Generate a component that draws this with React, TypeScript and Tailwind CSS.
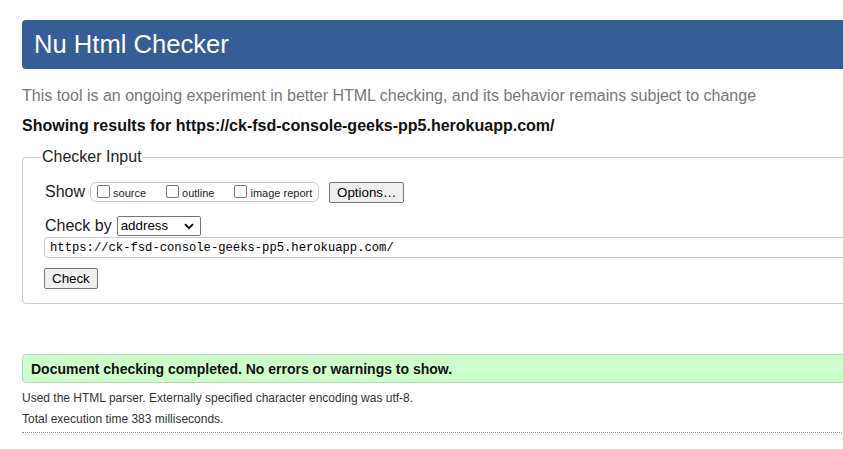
import React from 'react';

// Small square checkbox drawn like Chrome's default control
const Box = () => (
  <span className="inline-block w-[13px] h-[13px] border border-[#767676] rounded-[2px] bg-white shrink-0" />
);

const Option = ({ label }: { label: string }) => (
  <label className="flex items-center gap-[3px]">
    <Box />
    <span className="text-[11px] text-[#222] leading-none mt-[3px]">{label}</span>
  </label>
);

const Btn = ({ children }: { children: React.ReactNode }) => (
  <button className="h-[21px] px-[7px] bg-[#efefef] border border-[#767676] rounded-[2px] text-[13.33px] text-black leading-none">
    {children}
  </button>
);

export default function App() {
  return (
    <div className="w-[843px] h-[449px] overflow-hidden bg-white font-['Liberation_Sans',Arial,sans-serif] text-[#222]">
      <div className="pl-[22px] w-[1000px]">
        <div className="mt-[20px] h-[49px] bg-[#365d95] rounded-[4px] pl-[12px] flex items-center">
          <h1 className="text-white text-[25.6px] leading-none">Nu Html Checker</h1>
        </div>

        <p className="mt-[18px] text-[16px] leading-[18px] text-[#777]">
          This tool is an ongoing experiment in better HTML checking, and its behavior remains subject to change
        </p>
        <p className="mt-[12px] text-[16px] leading-[18px] font-bold text-[#111]">
          Showing results for https://ck-fsd-console-geeks-pp5.herokuapp.com/
        </p>

        <fieldset className="mt-[13px] border border-[#ccc] rounded-[4px] pl-[22px] pb-[13px]">
          <legend className="-ml-[4px] px-[1px] text-[16px] leading-[18px] text-[#222]">Checker Input</legend>

          <div className="mt-[15px] flex items-center h-[21px]">
            <span className="text-[16px]">Show</span>
            <div className="ml-[5px] h-[20px] w-[229px] border border-[#ccc] rounded-[6px] flex items-center pl-[6px] gap-[20px]">
              <Option label="source" />
              <Option label="outline" />
              <Option label="image report" />
            </div>
            <div className="ml-[10px]">
              <Btn>Options…</Btn>
            </div>
          </div>

          <div className="mt-[14px] flex items-center h-[20px]">
            <span className="text-[16px]">Check by</span>
            <div className="ml-[5px] h-[20px] w-[84px] border border-[#767676] rounded-[2px] flex items-center justify-between pl-[3px] pr-[6px]">
              <span className="text-[13.33px] text-black leading-none">address</span>
              <svg width="10" height="7" viewBox="0 0 10 7" fill="none">
                <path d="M1 1.2 L5 5.2 L9 1.2" stroke="#000" strokeWidth="1.8" />
              </svg>
            </div>
          </div>

          <div className="mt-[1px] -ml-[1px] h-[21px] border border-[#ccc] rounded-[4px] flex items-center pl-[5px]">
            <span className="mt-[2px] font-['Liberation_Mono','DejaVu_Sans_Mono',monospace] text-[12.2px] text-black leading-none">
              https://ck-fsd-console-geeks-pp5.herokuapp.com/
            </span>
          </div>

          <div className="mt-[8px] -ml-[1px]">
            <Btn>Check</Btn>
          </div>
        </fieldset>

        <div className="mt-[50px] h-[29px] bg-[#ccffcc] border border-[#b3dcb3] rounded-[4px] flex items-center pl-[8px]">
          <p className="text-[14px] font-bold text-[#111] leading-none">
            Document checking completed. No errors or warnings to show.
          </p>
        </div>

        <p className="mt-[8px] text-[12px] leading-[14px] text-[#333]">
          Used the HTML parser. Externally specified character encoding was utf-8.
        </p>
        <p className="mt-[7px] text-[12px] leading-[14px] text-[#333]">Total execution time 383 milliseconds.</p>
        <div className="mt-[6px] border-t border-dotted border-[#888]" />
      </div>
    </div>
  );
}
